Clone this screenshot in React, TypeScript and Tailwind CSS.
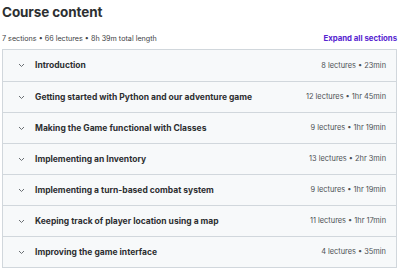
import React from 'react';

type Section = { title: string; lectures: number; length: string };

const sections: Section[] = [
  { title: 'Introduction', lectures: 8, length: '23min' },
  { title: 'Getting started with Python and our adventure game', lectures: 12, length: '1hr 45min' },
  { title: 'Making the Game functional with Classes', lectures: 9, length: '1hr 19min' },
  { title: 'Implementing an Inventory', lectures: 13, length: '2hr 3min' },
  { title: 'Implementing a turn-based combat system', lectures: 9, length: '1hr 19min' },
  { title: 'Keeping track of player location using a map', lectures: 11, length: '1hr 17min' },
  { title: 'Improving the game interface', lectures: 4, length: '35min' },
];

const Chevron: React.FC = () => (
  <svg width="7" height="5" viewBox="0 0 7 5" fill="none" className="shrink-0">
    <path d="M1 1l2.5 2.5L6 1" stroke="#6a6f73" strokeWidth="1" />
  </svg>
);

const App: React.FC = () => {
  return (
    <div className="w-[400px] h-[274px] bg-white text-[#2d2f31] font-['Inter',sans-serif] pl-[2px] pr-[3px] pt-[3px]">
      <h2 className="text-[13.5px] font-bold leading-[18px] tracking-[-0.1px]">Course content</h2>
      <div className="flex items-end justify-between mt-[11px] h-[13px]">
        <span className="text-[7.2px] text-[#3e4143]">7 sections • 66 lectures • 8h 39m total length</span>
        <button className="text-[7.8px] font-bold text-[#5624d0]">Expand all sections</button>
      </div>
      <ul className="mt-[4px] border border-[#d1d7dc]">
        {sections.map((s, i) => (
          <li
            key={s.title}
            className={`h-[31px] bg-[#f7f9fa] flex items-center pl-[15px] pr-[10px] ${i > 0 ? 'border-t border-[#d1d7dc]' : ''}`}
          >
            <Chevron />
            <span className="ml-[10px] text-[8.5px] font-bold flex-1 text-[#2d2f31]">{s.title}</span>
            <span className="text-[7.4px] text-[#4d5155]">
              {s.lectures} lectures • {s.length}
            </span>
          </li>
        ))}
      </ul>
    </div>
  );
};

export default App;
